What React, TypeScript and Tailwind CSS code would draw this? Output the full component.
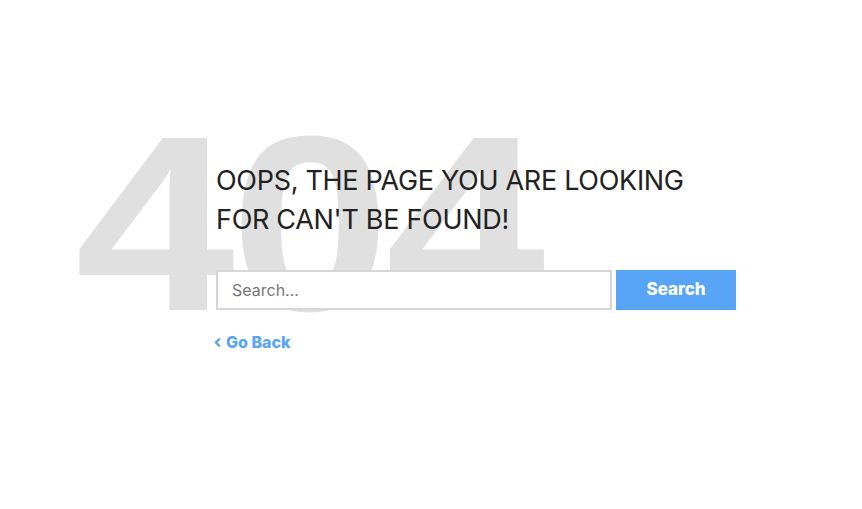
import { ChevronLeft } from "lucide-react";

export default function App() {
  return (
    <div className="w-[862px] h-[509px] bg-white relative overflow-hidden font-['Inter',sans-serif]">
      {/* Notfound block */}
      <div className="relative ml-[75px] mt-[123px] w-[710px] pl-[141px] pt-[38px]">
        <div className="absolute left-0 top-[-24px] origin-left scale-x-[1.15] text-[250px] leading-none font-black text-[#e0e0e0] font-['Liberation_Sans',sans-serif] tracking-[-4px] select-none">
          404
        </div>
        <div className="relative">
          <h1 className="text-[27px] leading-[39px] font-normal uppercase text-[#222] tracking-[-0.3px] w-[490px]">
            Oops, the page you are looking for can't be found!
          </h1>
          <form className="flex gap-[4px] mt-[31px]" onSubmit={(e) => e.preventDefault()}>
            <input
              type="text"
              placeholder="Search..."
              className="w-[396px] h-[40px] border-2 border-[#d6d6d6] bg-white px-[14px] text-[16px] text-[#222] placeholder:text-[#777] outline-none"
            />
            <button className="w-[120px] h-[40px] bg-[#58a5f8] text-white font-extrabold text-[17px]">
              Search
            </button>
          </form>
          <a href="#" className="flex items-center gap-[2px] mt-[20px] -ml-[5px] text-[#58a5f8] font-extrabold text-[16px]">
            <ChevronLeft className="w-[13px] h-[13px]" strokeWidth={4.5} />
            <span>Go Back</span>
          </a>
        </div>
      </div>
    </div>
  );
}
